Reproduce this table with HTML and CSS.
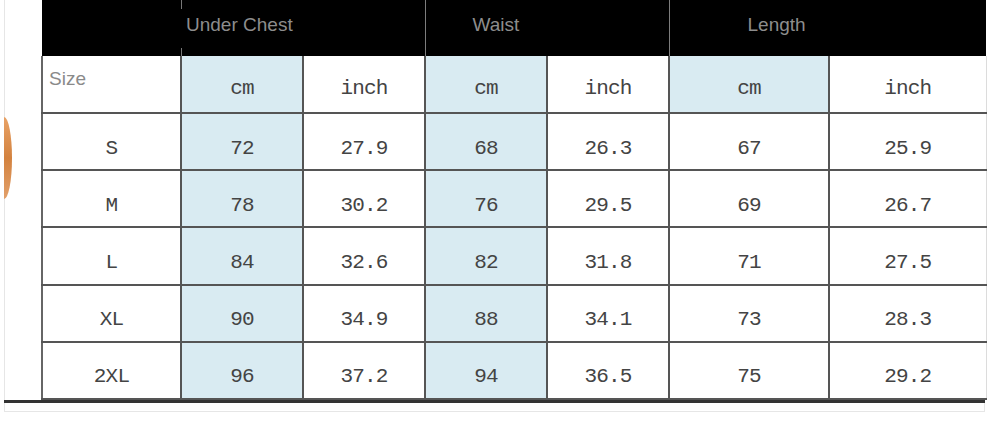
FILE: index.html
```html
<!DOCTYPE html>
<html>
<head>
<meta charset="utf-8">
<link rel="stylesheet" href="styles.css">
</head>
<body>
<div class="frame">
  <div class="main">
    <div class="side"><div class="blob"></div></div>
    <table class="chart">
      <colgroup>
        <col class="c-size"><col class="c-n"><col class="c-n"><col class="c-n"><col class="c-n"><col class="c-w"><col class="c-w2">
      </colgroup>
      <thead>
        <tr class="hd">
          <th class="h-blank"></th>
          <th class="h-uc" colspan="2"><span class="htxt">Under Chest</span></th>
          <th class="h-w" colspan="2"><span class="htxt">Waist</span></th>
          <th class="h-l" colspan="2"><span class="htxt">Length</span></th>
        </tr>
        <tr class="units">
          <td class="size-lbl">Size</td>
          <td class="blue">cm</td><td>inch</td>
          <td class="blue">cm</td><td>inch</td>
          <td class="blue">cm</td><td class="last">inch</td>
        </tr>
      </thead>
      <tbody>
        <tr><td class="sz">S</td><td class="blue">72</td><td>27.9</td><td class="blue">68</td><td>26.3</td><td>67</td><td class="last">25.9</td></tr>
        <tr><td class="sz">M</td><td class="blue">78</td><td>30.2</td><td class="blue">76</td><td>29.5</td><td>69</td><td class="last">26.7</td></tr>
        <tr><td class="sz">L</td><td class="blue">84</td><td>32.6</td><td class="blue">82</td><td>31.8</td><td>71</td><td class="last">27.5</td></tr>
        <tr><td class="sz">XL</td><td class="blue">90</td><td>34.9</td><td class="blue">88</td><td>34.1</td><td>73</td><td class="last">28.3</td></tr>
        <tr><td class="sz">2XL</td><td class="blue">96</td><td>37.2</td><td class="blue">94</td><td>36.5</td><td>75</td><td class="last">29.2</td></tr>
      </tbody>
    </table>
  </div>
  <div class="rule"></div>
  <div class="foot"></div>
</div>
</body>
</html>
```
FILE: styles.css
```css
html, body {
  margin: 0;
  padding: 0;
  background: #fff;
}

.frame {
  margin-left: 4px;
  width: 980px;
  border-left: 1px solid #e6e6e6;
}

.main {
  display: flex;
  align-items: flex-start;
}

.side {
  width: 36px;
  flex: none;
  padding-top: 117px;
}

.blob {
  width: 8px;
  height: 82px;
  margin-left: -1px;
  background: linear-gradient(#e8a266, #d3823f 50%, #e2a06a);
  border-radius: 0 100% 100% 0 / 0 50% 50% 0;
}

.chart {
  border-collapse: collapse;
  table-layout: fixed;
  width: 944px;
  font-family: "Liberation Mono", "DejaVu Sans Mono", monospace;
  font-size: 21px;
  letter-spacing: -0.8px;
  color: #444;
}

.c-size { width: 139px; }
.c-n { width: 122px; }
.c-w { width: 160px; }
.c-w2 { width: 157px; }

.hd th {
  background: #000;
  height: 42px;
  padding: 14px 0 0 0;
  vertical-align: top;
  text-align: left;
  border: 0;
  font-family: "Liberation Sans", Arial, sans-serif;
  font-weight: normal;
  font-size: 19px;
  letter-spacing: 0;
  line-height: 22px;
  color: #8d8d8d;
}

.hd .h-uc {
  padding-left: 5px;
  background-color: #000;
  background-image: linear-gradient(#777, #777), linear-gradient(#777, #777);
  background-size: 1px 9px, 1px 8px;
  background-position: left top, left bottom;
  background-repeat: no-repeat;
}

.hd .h-w {
  padding-left: 47px;
  border-left: 1px solid #7d7d7d;
}

.hd .h-l {
  padding-left: 78px;
  border-left: 1px solid #7d7d7d;
}

td {
  height: 41.2px;
  padding: 14px 0 0 0;
  text-align: center;
  vertical-align: middle;
  border: 2px solid #555;
  line-height: 24px;
}

.units td {
  height: 46px;
  padding-top: 10px;
  border-top: 0;
}

td.blue {
  background: #d9ebf2;
}

td.last {
  border-right: 1px solid #dcdcdc;
}

.units td.size-lbl {
  text-align: left;
  vertical-align: top;
  height: 44px;
  padding: 12px 0 0 6px;
  font-family: "Liberation Sans", Arial, sans-serif;
  font-size: 19px;
  letter-spacing: 0;
  line-height: 22px;
  color: #8a8a8a;
  border-left-color: #666;
}

td.sz {
  border-left-color: #666;
}

.rule {
  height: 3px;
  background: #333;
  width: 981px;
  margin-left: -1px;
}

.foot {
  height: 8px;
  border-right: 1px solid #e6e6e6;
  border-bottom: 1px solid #e6e6e6;
}
```
